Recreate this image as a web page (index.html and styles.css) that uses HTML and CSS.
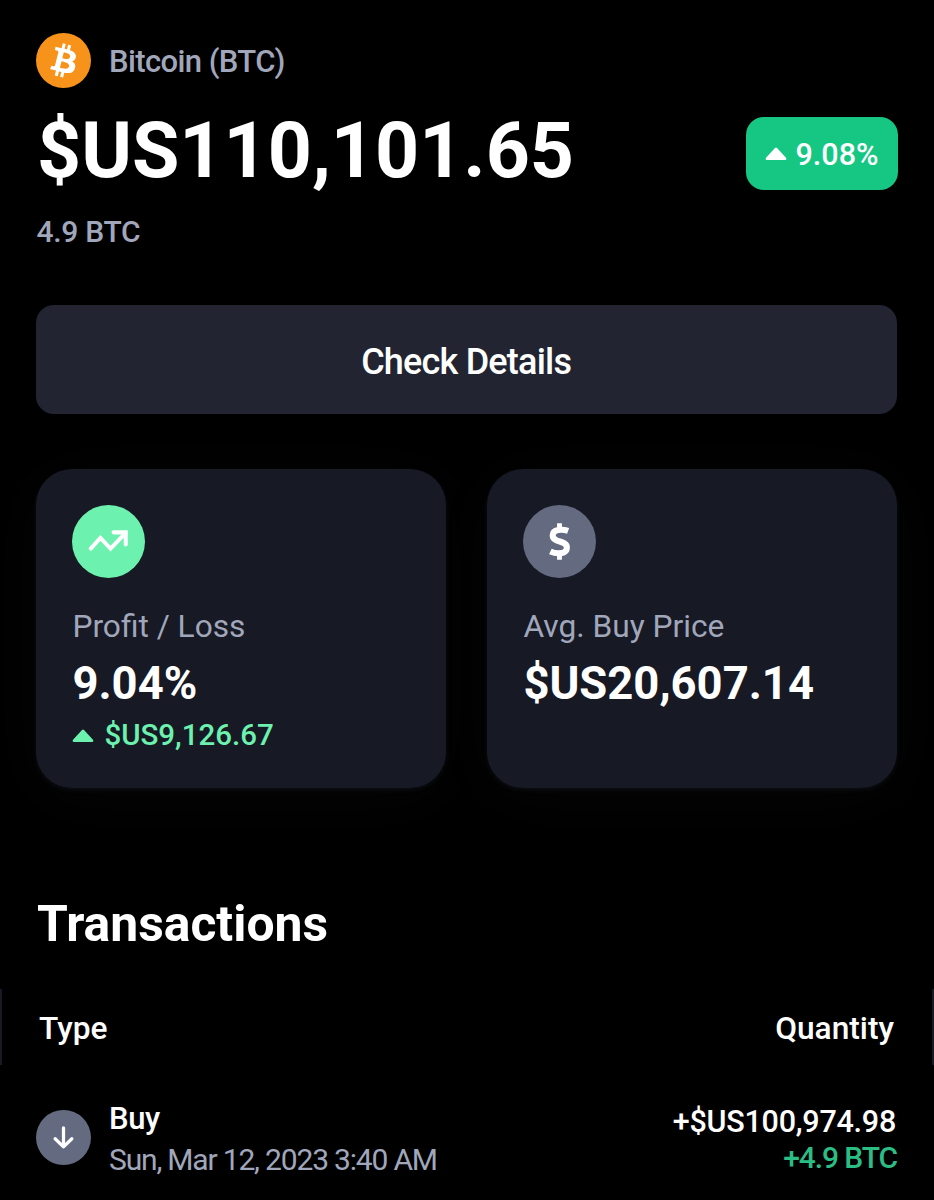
FILE: index.html
```html
<!DOCTYPE html>
<html lang="en">
<head>
<meta charset="utf-8">
<title>Bitcoin (BTC)</title>
<link rel="stylesheet" href="styles.css">
</head>
<body>
<main class="page">
  <header class="coin">
    <svg class="coin-logo" viewBox="0 0 32 32"><circle cx="16" cy="16" r="16" fill="#f7931a"/><path fill="#fff" d="M23.189 14.02c.314-2.096-1.283-3.223-3.465-3.975l.708-2.84-1.728-.43-.69 2.765c-.454-.114-.92-.22-1.385-.326l.695-2.783L15.596 6l-.708 2.839c-.376-.086-.746-.17-1.104-.26l.002-.009-2.384-.595-.46 1.846s1.283.294 1.256.312c.7.175.826.638.805 1.006l-.806 3.235c.048.012.11.03.18.057l-.183-.045-1.13 4.532c-.086.212-.303.531-.793.41.018.025-1.256-.313-1.256-.313l-.858 1.978 2.25.561c.418.105.828.215 1.231.318l-.715 2.872 1.727.43.708-2.84c.472.127.93.245 1.378.357l-.706 2.828 1.728.43.715-2.866c2.948.558 5.164.333 6.097-2.333.752-2.146-.037-3.385-1.588-4.192 1.13-.26 1.98-1.003 2.207-2.538zm-3.95 5.538c-.533 2.147-4.148.986-5.32.695l.95-3.805c1.172.293 4.929.872 4.37 3.11zm.535-5.569c-.487 1.953-3.495.96-4.47.717l.86-3.45c.975.243 4.118.696 3.61 2.733z"/></svg>
    <span class="coin-name">Bitcoin (BTC)</span>
  </header>
  <section class="balance">
    <h1 class="price">$US110,101.65</h1>
    <div class="badge">
      <svg class="caret" viewBox="0 0 22 13"><path d="M1 10.8 10 .9Q11 0 12 .9L21 10.8Q22 13 20 13H2Q0 13 1 10.8Z" fill="currentColor"/></svg>
      <span class="badge-text">9.08%</span>
    </div>
  </section>
  <p class="holding">4.9 BTC</p>
  <button class="details"><span class="details-text">Check Details</span></button>
  <section class="cards">
    <article class="card">
      <span class="disc disc-green"><svg class="disc-icon" viewBox="0 0 72 72" fill="none" stroke="#fff" stroke-width="4"><path d="M18.5 43 28 32.5 38 43 53 27.5" stroke-linecap="round" stroke-linejoin="miter"/><path d="M41 27H53V39" stroke-linecap="round"/></svg></span>
      <p class="label"><span class="label-profit">Profit / Loss</span></p>
      <p class="value"><span class="value-profit">9.04%</span></p>
      <p class="delta"><svg class="caret" viewBox="0 0 22 13"><path d="M1 10.8 10 .9Q11 0 12 .9L21 10.8Q22 13 20 13H2Q0 13 1 10.8Z" fill="currentColor"/></svg><span class="delta-text">$US9,126.67</span></p>
    </article>
    <article class="card">
      <span class="disc disc-gray"><svg class="disc-icon" viewBox="0 0 72 72" fill="none" stroke="#fff"><path d="M44.5 25.6C39 23.6 29.3 23.5 29.3 30 29.3 37.5 43.3 34.5 43.3 41.8 43.3 48.8 33 48.6 27 45.8" stroke-width="6"/><path d="M36 18V25M36 47V54" stroke-width="4.8"/></svg></span>
      <p class="label"><span class="label-avg">Avg. Buy Price</span></p>
      <p class="value"><span class="value-avg">$US20,607.14</span></p>
    </article>
  </section>
  <h2 class="title">Transactions</h2>
  <div class="table-head"><span class="type">Type</span><span class="quantity">Quantity</span></div>
  <div class="row">
    <svg class="row-icon" viewBox="0 0 54 54"><circle cx="27" cy="27" r="27" fill="#646b80"/><path d="M27 17.5V36M18.8 28.2 27 36.2 35.2 28.2" fill="none" stroke="#fff" stroke-width="3.2" stroke-linecap="round" stroke-linejoin="round"/></svg>
    <div class="row-main"><span class="kind">Buy</span><span class="date">Sun, Mar 12, 2023 3:40 AM</span></div>
    <div class="row-end"><span class="amount">+$US100,974.98</span><span class="qty">+4.9 BTC</span></div>
  </div>
</main>
</body>
</html>
```
FILE: styles.css
```css
* { box-sizing: border-box; margin: 0; }
body { background: #000; color: #fff; font-family: Roboto, "Liberation Sans", sans-serif; font-weight: 500; }
.page { width: 934px; height: 1200px; overflow: hidden; padding-top: 33px; white-space: nowrap; }
.coin { display: flex; align-items: center; gap: 18px; height: 55px; padding-left: 36px; }
.coin-logo { width: 55px; height: 55px; }
.coin-name { padding-top: 2px; font-size: 31px; line-height: 56px; letter-spacing: -.6px; color: #a1a7bb; }
.balance { display: flex; justify-content: space-between; align-items: flex-start; height: 117px; padding: 29px 36.5px 0 37px; }
.price { font-size: 77px; font-weight: 700; line-height: 68px; }
.badge { display: flex; align-items: center; gap: 9px; width: 152px; height: 73px; padding-left: 19px; border-radius: 18px; background: #16c784; }
.badge-text { padding-top: 2px; font-size: 30.5px; line-height: 75px; }
.caret { width: 22px; height: 13px; flex: none; }
.holding { font-size: 30px; line-height: 53px; height: 53px; padding-left: 36.5px; letter-spacing: -.3px; color: #a1a7bb; }
.details { display: block; width: 861px; height: 109px; margin: 47px 0 0 36.4px; padding: 1px 1.5px 0 0; border: 0; border-radius: 18px; background: #222531; color: #fff; font: 500 36px/112px Roboto, "Liberation Sans", sans-serif; letter-spacing: -.8px; }
.cards { display: grid; grid-template-columns: 410px 410px; gap: 41px; padding: 55px 36.4px 0; }
.card { height: 319px; padding: 36px; border-radius: 36px; background: #171924; box-shadow: 0 2px 5px rgba(88,102,126,.13), 0 8px 64px rgba(128,138,157,.045); }
.disc { display: block; width: 73px; height: 73px; border-radius: 50%; }
.disc-green { background: #6cf2ae; }
.disc-gray { background: #646b80; }
.disc-icon { display: block; width: 73px; height: 73px; }
.label { margin-top: 28px; font-size: 31.7px; font-weight: 400; line-height: 42px; color: #a1a7bb; }
.value { margin-top: 5px; font-size: 45.4px; font-weight: 700; line-height: 62px; height: 61px; }
.delta { display: flex; align-items: center; gap: 10px; font-size: 29.5px; line-height: 42px; color: #6cf2ae; }
.title { margin: 101px 0 0 37px; font-size: 49.8px; line-height: 70px; }
.table-head { display: flex; justify-content: space-between; height: 76px; margin-top: 30px; padding: 0 38px 0 37px; border: 0 solid #171924; border-width: 0 2px; font-size: 31.7px; line-height: 80px; }
.row { display: flex; align-items: flex-start; padding: 38px 38px 0 36px; }
.row-icon { width: 55px; height: 55px; margin-top: 7px; }
.row-main { display: flex; flex-direction: column; margin-left: 18px; }
.row-end { display: flex; flex-direction: column; align-items: flex-end; margin: 2px 0 0 auto; }
.kind { font-size: 31px; line-height: 32px; letter-spacing: -.4px; }
.date { margin-top: 4px; font-size: 30px; font-weight: 400; line-height: 41px; letter-spacing: -1.18px; color: #a1a7bb; }
.amount { font-size: 30.5px; line-height: 34px; letter-spacing: -.25px; }
.qty { margin: -1px -1px 0 0; font-size: 30px; line-height: 39px; letter-spacing: -1.1px; color: #2abd84; }
```
